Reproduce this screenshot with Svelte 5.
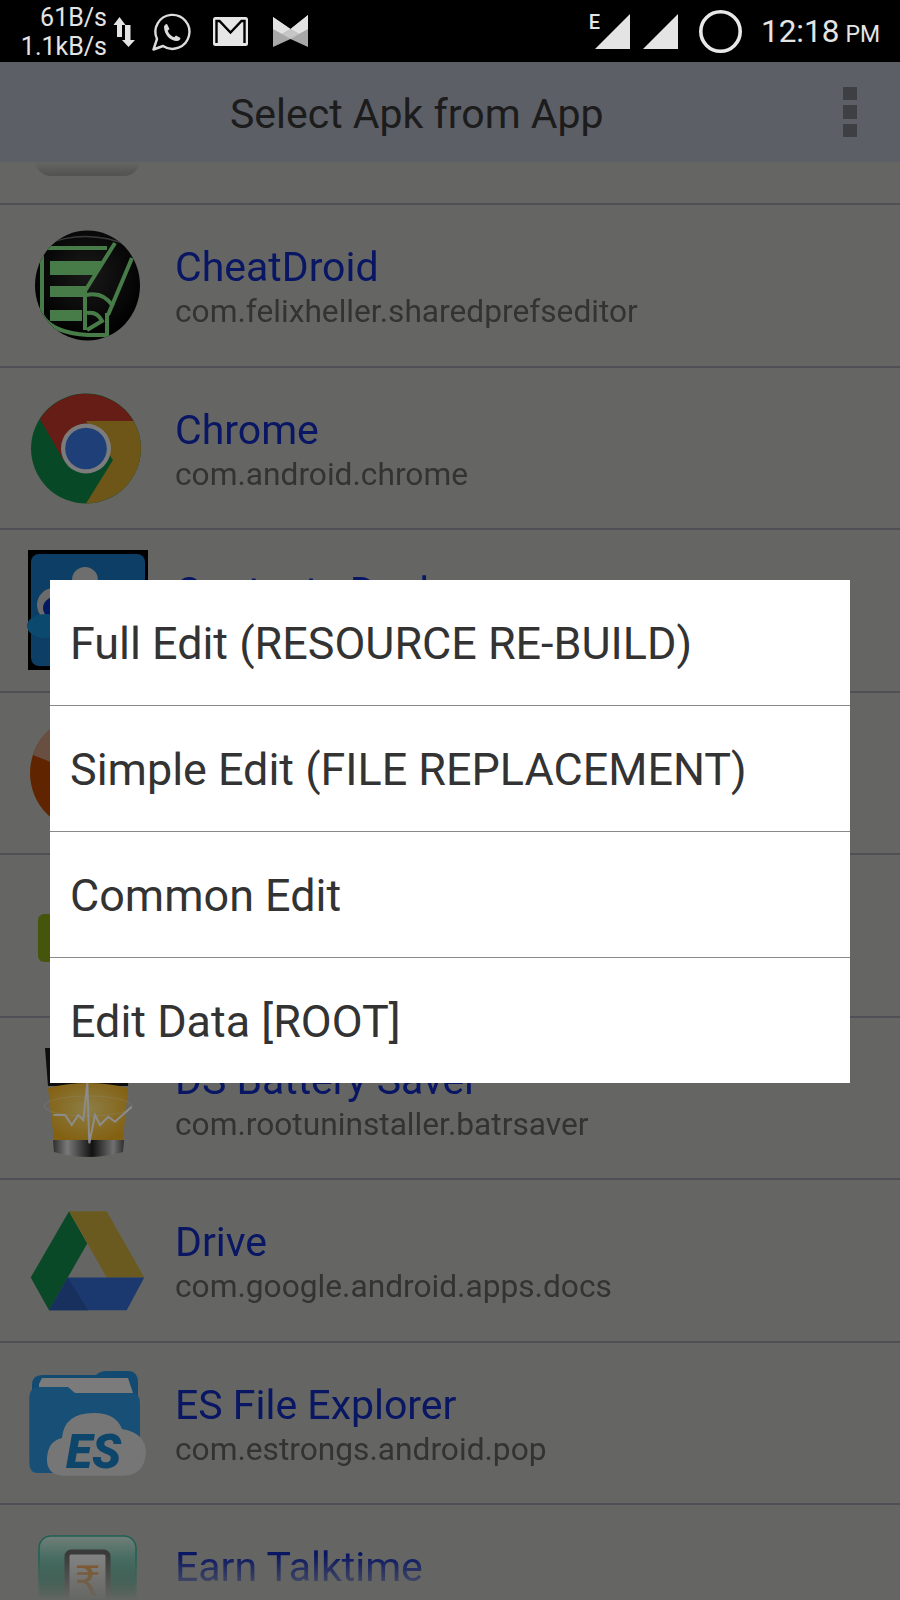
<script>
  const rows = [
    { name: '', pkg: '', icon: 'gray' },
    { name: 'CheatDroid', pkg: 'com.felixheller.sharedprefseditor', icon: 'cheat' },
    { name: 'Chrome', pkg: 'com.android.chrome', icon: 'chrome' },
    { name: 'Contacts Desk', pkg: '', icon: 'square' },
    { name: '', pkg: '', icon: 'orange' },
    { name: '', pkg: '', icon: 'green' },
    { name: 'DS Battery Saver', pkg: 'com.rootuninstaller.batrsaver', icon: 'glass' },
    { name: 'Drive', pkg: 'com.google.android.apps.docs', icon: 'drive' },
    { name: 'ES File Explorer', pkg: 'com.estrongs.android.pop', icon: 'es' },
    { name: 'Earn Talktime', pkg: '', icon: 'earn' }
  ];
  const options = ['Full Edit (RESOURCE RE-BUILD)', 'Simple Edit (FILE REPLACEMENT)', 'Common Edit', 'Edit Data [ROOT]'];
</script>

<div class="screen">
  <header class="status">
    <div class="speed"><span>61B/s</span><span>1.1kB/s</span></div>
    <svg class="s-icons" width="200" height="62" viewBox="0 0 200 62">
      <path d="M0.5 25 L6.5 17 L12.5 25 H9 V37 H4 V25Z" fill="#e4e4e4"/>
      <path d="M9 40 H12 V25 H17.5 V40 H22 L15.5 47Z" fill="#e4e4e4"/>
      <path d="M40.5 49.5 L44 39 A17 17 0 1 1 50 46 Z" fill="none" stroke="#dcdcdc" stroke-width="2.4" stroke-linejoin="round"/>
      <path d="M51 27 c0 -1.5 1.5 -3 3 -3 l2.5 5 -1.8 1.8 c1 3 3.5 5.5 6.5 6.5 l1.8 -1.8 4.5 2.5 c0 2 -2 3 -3.5 3 C57 41 51 34 51 27Z" fill="#dcdcdc"/>
      <rect x="100" y="17" width="35" height="29" rx="2.5" fill="#e6e6e6"/>
      <path d="M103.5 43 V21 H106.5 L117.5 32.5 L128.5 21 H131.5 V43" fill="none" stroke="#000" stroke-width="2.4" stroke-linejoin="miter"/>
      <path d="M160 17 L177.5 29 L195 15 V47 L177.5 39 L160 47Z" fill="#a8a8a8"/>
      <path d="M160 17 L177.5 29 L195 15 V29 L186 34 L177.5 29 L169 34 L160 29Z" fill="#e2e2e2"/>
      <path d="M177.5 29 L186 34 L177.5 39 L169 34Z" fill="#c6c6c6"/>
    </svg>
    <div class="s-right">
      <span class="e">E</span>
      <svg class="tri" width="35" height="35" viewBox="0 0 35 35"><path d="M0 35 L35 0 V35Z" fill="#e4e4e4"/></svg>
      <svg class="tri second" width="35" height="35" viewBox="0 0 35 35"><path d="M0 35 L35 0 V35Z" fill="#e4e4e4"/></svg>
      <svg class="ring" width="43" height="43" viewBox="0 0 43 43"><circle cx="21.5" cy="21.5" r="19.7" fill="none" stroke="#e8e8e8" stroke-width="3.6"/></svg>
      <span class="time">12:18<small>PM</small></span>
    </div>
  </header>

  <div class="appbar">
    <h1>Select Apk from App</h1>
    <div class="menu"><i></i><i></i><i></i></div>
  </div>

  <div class="listwrap">
    <ul class="list">
      {#each rows as r}
        <li class="row">
          <div class="icon">
            {#if r.icon === 'gray'}
              <svg width="120" height="120" viewBox="0 0 120 120"><rect x="7" y="-20" width="105" height="133" rx="16" fill="#868686"/></svg>
            {:else if r.icon === 'cheat'}
              <svg width="120" height="120" viewBox="0 0 120 120">
                <defs>
                  <clipPath id="cheatClip"><ellipse cx="59.5" cy="60.5" rx="52.5" ry="55"/></clipPath>
                  <radialGradient id="cheatBg" cx=".5" cy=".4" r=".6"><stop offset="0" stop-color="#2e2e2e"/><stop offset="1" stop-color="#000"/></radialGradient>
                </defs>
                <ellipse cx="59.5" cy="60.5" rx="52.5" ry="55" fill="url(#cheatBg)"/>
                <g clip-path="url(#cheatClip)">
                  <path d="M16 20 Q60 2 104 22" fill="none" stroke="#6a6a6a" stroke-width="1.5"/>
                  <g fill="#82e084">
                    <path d="M22 36 H74 L66 50 H22Z"/>
                    <path d="M22 61 H61 L55 72 H22Z"/>
                    <rect x="22" y="85" width="32" height="11"/>
                  </g>
                  <g fill="none" stroke="#82e084" stroke-width="4">
                    <path d="M79 23 H14 V90 Q24 108 60 110 H79 V88"/>
                    <path d="M87 18 L57 66 V105"/>
                    <path d="M104 33 L80 90"/>
                    <path d="M58 70 Q75 66 85 81"/>
                    <path d="M59 88 Q69 86 74 96 L59 105"/>
                  </g>
                </g>
              </svg>
            {:else if r.icon === 'chrome'}
              <svg width="120" height="120" viewBox="0 0 120 120">
                <circle cx="58" cy="60.5" r="55" fill="#0e8546"/>
                <path d="M105.6 33 A55 55 0 0 0 12 31 L36 73 L58 45Z" fill="#bb3528"/>
                <path d="M105.6 33 A55 55 0 0 1 58 115.5 L85 72 L58 33Z" fill="#c89b2c"/>
                <circle cx="58" cy="60.5" r="25" fill="#e2e2e2"/>
                <circle cx="58" cy="60.5" r="20.8" fill="#3873da"/>
              </svg>
            {:else if r.icon === 'square'}
              <svg width="120" height="120" viewBox="0 0 120 120">
                <rect width="120" height="120" fill="#000"/>
                <rect x="3" y="4" width="114" height="112" rx="8" fill="#1873ba"/>
                <circle cx="57" cy="30" r="13" fill="#c8c8c8"/>
                <ellipse cx="26" cy="55" rx="17" ry="17" fill="#c4c4c4"/>
                <ellipse cx="27" cy="58" rx="12" ry="11" fill="#0630b0"/>
                <ellipse cx="18" cy="76" rx="19" ry="12" fill="#1488c8"/>
              </svg>
            {:else if r.icon === 'orange'}
              <svg width="120" height="120" viewBox="0 0 120 120">
                <defs><clipPath id="orClip"><circle cx="60" cy="60" r="58"/></clipPath></defs>
                <circle cx="60" cy="60" r="58" fill="#b04400"/>
                <path d="M0 40 L30 52 V0 H0Z" fill="#c09078" clip-path="url(#orClip)"/>
              </svg>
            {:else if r.icon === 'green'}
              <svg width="120" height="120" viewBox="0 0 120 120"><rect x="10" y="39" width="100" height="48" rx="6" fill="#7f9c14"/></svg>
            {:else if r.icon === 'glass'}
              <svg width="120" height="120" viewBox="0 0 120 120">
                <defs>
                  <radialGradient id="gold" cx=".5" cy=".45" r=".6"><stop offset="0" stop-color="#ffe680"/><stop offset="1" stop-color="#f0b020"/></radialGradient>
                  <linearGradient id="metal"><stop offset="0" stop-color="#555"/><stop offset=".2" stop-color="#ddd"/><stop offset=".55" stop-color="#222"/><stop offset=".85" stop-color="#ccc"/><stop offset="1" stop-color="#555"/></linearGradient>
                </defs>
                <path d="M17 10 H102 L100 48 H20Z" fill="#1a1a1a"/>
                <path d="M20 50 Q60 40 100 50 L95 102 H26Z" fill="url(#gold)"/>
                <path d="M25 102 H96 L95 114 Q60 124 26 114Z" fill="url(#metal)"/>
                <ellipse cx="60" cy="68" rx="44" ry="10" fill="none" stroke="#fff" stroke-width="1" opacity=".3"/>
                <path d="M25.3 77 L37 77 L43.7 87 L50.3 77 L55.3 82 L59.3 45.3 L61.3 105.3 L67 77 L72 87 L80.3 78.7 L87 83.7 L103.7 68.7" fill="none" stroke="#fff" stroke-width="2"/>
              </svg>
            {:else if r.icon === 'drive'}
              <svg width="120" height="120" viewBox="0 0 120 120">
                <path d="M2.7 77.5 L41 11.2 L59.3 43.5 L21 110.2Z" fill="#128548"/>
                <path d="M41 11.2 H78.7 L116.3 77.5 H78.7Z" fill="#c4a43a"/>
                <path d="M39.7 77.5 H116.3 L98.7 110.2 H21Z" fill="#3268c8"/>
                <path d="M21 110.2 L39.7 77.5 L60 110.2Z" fill="#2a58ac"/>
              </svg>
            {:else if r.icon === 'es'}
              <svg width="120" height="120" viewBox="0 0 120 120">
                <path d="M4 22 Q4 12 14 12 H68 Q72 8 78 8 H100 Q110 8 110 20 V60 H4Z" fill="#2388d0"/>
                <path d="M11 21 L14 15 H100 L105 30 H11Z" fill="#e0e0e0"/>
                <path d="M1.3 35 Q1.3 24 12 24 H40 L47 30 H103 Q112 30 112 40 V100 H30 V110 H10 Q1.3 110 1.3 100Z" fill="#2b91d8"/>
                <path d="M36 112.7 Q18 112 19 95 Q20 78 34 75 Q36 50 66 50 Q88 50 94 66 Q118 70 118 90 Q116 112 96 112.7Z" fill="#d8d8d8"/>
                <text x="38" y="105" class="es-text">ES</text>
              </svg>
            {:else if r.icon === 'earn'}
              <svg width="120" height="120" viewBox="0 0 120 120">
                <defs><linearGradient id="earnBg" x1="0" y1="0" x2="0" y2="1"><stop offset="0" stop-color="#cfe6dc"/><stop offset=".45" stop-color="#159a78"/><stop offset="1" stop-color="#0b8a6a"/></linearGradient></defs>
                <rect x="11" y="11" width="97" height="120" rx="12" fill="url(#earnBg)" stroke="#35b095" stroke-width="1.5"/>
                <rect x="39" y="27" width="41" height="100" rx="4" fill="#ededed" stroke="#6b6b6b" stroke-width="5"/>
                <text x="59.5" y="71" class="rupee">₹</text>
              </svg>
            {/if}
          </div>
          <div class="text">
            <div class="name">{r.name}</div>
            <div class="pkg">{r.pkg}</div>
          </div>
        </li>
      {/each}
    </ul>
  </div>

  <div class="scrim"></div>

  <div class="dialog">
    {#each options as o}
      <div class="opt">{o}</div>
    {/each}
  </div>
</div>

<style>
  :global(body) { margin: 0; background: #000; }
  .screen {
    position: relative;
    width: 900px;
    height: 1600px;
    overflow: hidden;
    display: flex;
    flex-direction: column;
    font-family: Roboto, "Liberation Sans", sans-serif;
    background: #b8bbb4;
  }
  .status {
    height: 62px;
    flex: none;
    background: #000;
    color: #e4e4e4;
    display: flex;
    align-items: flex-start;
    position: relative;
    z-index: 5;
  }
  .speed {
    width: 107px;
    display: flex;
    flex-direction: column;
    align-items: flex-end;
    font-size: 25px;
    line-height: 29px;
    padding-top: 3px;
  }
  .s-icons { margin-left: 6px; flex: none; }
  .s-right {
    margin-left: auto;
    display: flex;
    align-items: flex-start;
    padding-right: 20px;
  }
  .tri { margin-top: 14px; }
  .tri.second { margin-left: 13px; }
  .ring { margin: 10px 19px 0 21px; }
  .e { font-size: 20px; font-weight: 500; margin-top: 12px; margin-right: -5px; line-height: 20px; }
  .time { font-size: 31.5px; line-height: 62px; margin-top: 1px; white-space: nowrap; }
  .time small { font-size: 23px; margin-left: 6px; }
  .appbar {
    height: 100px;
    flex: none;
    background: #a8adbb;
    position: relative;
    z-index: 3;
    padding-left: 230px;
  }
  h1 { margin: 0; padding-top: 3px; font-size: 41px; font-weight: 400; color: #333; line-height: 99px; white-space: nowrap; }
  .menu {
    position: absolute;
    display: flex;
    flex-direction: column;
    gap: 5px;
    left: 843px;
    top: 25px;
  }
  .menu i { display: block; width: 14px; height: 13.3px; background: #717378; }
  .listwrap {
    flex: 1;
    overflow: hidden;
    -webkit-mask-image: linear-gradient(transparent, #000 20px, #000 calc(100% - 45px), transparent);
    mask-image: linear-gradient(transparent, #000 20px, #000 calc(100% - 45px), transparent);
  }
  .list {
    list-style: none;
    margin: -119.5px 0 0;
    padding: 0;
  }
  .row {
    box-sizing: border-box;
    height: 162.5px;
    border-bottom: 2px solid #90939c;
    display: flex;
    align-items: center;
    padding-left: 28px;
  }
  .icon { width: 120px; height: 120px; flex: none; }
  .icon svg { display: block; overflow: visible; }
  .text { margin-left: 27px; padding-top: 6px; white-space: nowrap; }
  .name { font-size: 41px; line-height: 48px; min-height: 48px; color: #1229b4; }
  .pkg { font-size: 31.7px; line-height: 41.6px; min-height: 41.6px; color: #5d5d5d; }
  .es-text { font: italic 900 48px Roboto, sans-serif; fill: #1a7ec4; }
  .rupee { font: 400 42px "DejaVu Sans", sans-serif; fill: #f29a3a; text-anchor: middle; }
  .scrim {
    position: absolute;
    left: 0; right: 0; top: 62px; bottom: 0;
    background: rgba(0,0,0,.45);
    z-index: 4;
  }
  .dialog {
    position: absolute;
    left: 50px;
    top: 580px;
    width: 800px;
    background: #fff;
    z-index: 6;
  }
  .opt {
    box-sizing: border-box;
    height: 126px;
    padding: 34px 0 0 20px;
    font-size: 44.9px;
    line-height: 60px;
    color: #333;
    border-bottom: 1px solid #8a8a8a;
    white-space: nowrap;
  }
  .opt:last-child { border-bottom: 0; height: 125px; }
</style>
